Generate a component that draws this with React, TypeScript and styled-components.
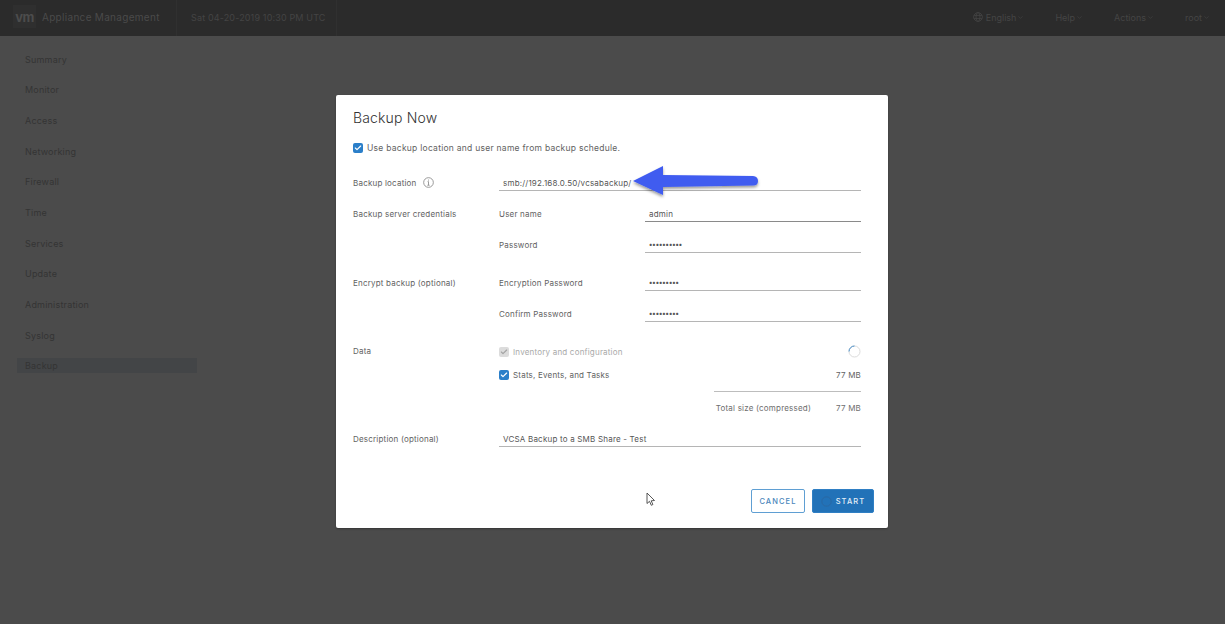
import styled, { createGlobalStyle } from "styled-components";
import { ChevronDown, Check } from "lucide-react";

const GlobalStyle = createGlobalStyle`
  html, body {
    margin: 0;
    height: 100%;
    overflow: hidden;
    background: #4b4b4b;
    font-family: "Inter", "Open Sans", sans-serif;
  }
  * { box-sizing: border-box; }
`;

const Page = styled.div`
  width: 1225px;
  height: 624px;
  display: flex;
  flex-direction: column;
  position: relative;
  overflow: hidden;
`;

const Header = styled.header`
  height: 36px;
  background: #2b2b2b;
  display: flex;
  align-items: center;
  padding-left: 13px;
  color: #4a4a4a;
`;

const Logo = styled.div`
  width: 23px;
  height: 23px;
  margin-top: -3px;
  background: #2f2f2f;
  display: flex;
  align-items: center;
  justify-content: center;
  font-size: 13px;
  font-weight: 700;
  letter-spacing: -0.5px;
  color: #4c4c4c;
`;

const AppTitle = styled.div`
  margin-left: 6px;
  padding-bottom: 2px;
  width: 134px;
  font-size: 10px;
  letter-spacing: 0.3px;
  white-space: nowrap;
`;

const DateCell = styled.div`
  height: 36px;
  width: 161px;
  border-left: 1px solid #303030;
  border-right: 1px solid #303030;
  display: flex;
  align-items: center;
  padding: 0 0 2px 14px;
  font-size: 9px;
  letter-spacing: 0.15px;
  color: #444;
  white-space: nowrap;
`;

const HeaderRight = styled.div`
  margin-left: auto;
  display: flex;
  align-items: center;
  padding: 0 15px 2px 0;
`;

const HeaderMenu = styled.div<{ $gap: number }>`
  display: flex;
  align-items: center;
  margin-left: ${(p) => p.$gap}px;
  font-size: 9px;
  color: #454545;
  white-space: nowrap;

  svg.chev {
    margin-left: 1px;
  }
`;

const Body = styled.div`
  flex: 1;
  display: flex;
`;

const Sidebar = styled.nav`
  width: 197px;
  padding: 15.5px 0 0 17px;
  display: flex;
  flex-direction: column;
  gap: 15.7px;
`;

const NavItem = styled.div<{ $active?: boolean }>`
  height: 15px;
  line-height: 15px;
  padding-left: 8px;
  font-size: 9px;
  letter-spacing: 0.2px;
  color: #343434;
  background: ${(p) => (p.$active ? "#434547" : "transparent")};
`;

const Overlay = styled.div`
  position: absolute;
  inset: 0;
  padding: 95px 337px 96px 336px;
`;

const Modal = styled.div`
  height: 433px;
  background: #fff;
  border-radius: 2px;
  box-shadow: 0 1px 2px rgba(0, 0, 0, 0.3);
  padding: 13px 27px 0 17px;
  display: flex;
  flex-direction: column;
  position: relative;
  color: #626262;
  font-size: 8px;
  letter-spacing: 0.2px;
`;

const Title = styled.h3`
  margin: 0;
  height: 20px;
  line-height: 20px;
  font-size: 14px;
  font-weight: 300;
  letter-spacing: 0.15px;
  color: #333;
`;

const CheckLine = styled.label<{ $muted?: boolean }>`
  display: flex;
  align-items: center;
  gap: 4px;
  height: 15px;
  color: ${(p) => (p.$muted ? "#a9a9a9" : "#626262")};
`;

const ScheduleCheck = styled(CheckLine)`
  margin-top: 12px;
  font-size: 8.5px;
  letter-spacing: 0.26px;
`;

const Box = styled.span<{ $muted?: boolean }>`
  width: 10px;
  height: 10px;
  border-radius: 2px;
  display: flex;
  align-items: center;
  justify-content: center;
  color: ${(p) => (p.$muted ? "#a4a4a4" : "#fff")};
  background: ${(p) => (p.$muted ? "#dcdcdc" : "#2b7fc9")};
`;

const Row = styled.div<{ $top: number }>`
  display: grid;
  grid-template-columns: 146px 146px 1fr;
  align-items: center;
  height: 15px;
  margin-top: ${(p) => p.$top}px;
`;

const SectionLabel = styled.div`
  display: flex;
  align-items: center;
  gap: 6px;
  padding-bottom: 2px;
  white-space: nowrap;
`;

const SubLabel = styled.div`
  grid-column: 2;
  padding-bottom: 2px;
  white-space: nowrap;
`;

const Field = styled.div<{ $wide?: boolean; $strong?: boolean; $dots?: boolean }>`
  grid-column: ${(p) => (p.$wide ? "2 / 4" : "3")};
  height: 15px;
  line-height: 14px;
  padding-left: 4px;
  border-bottom: 1px solid ${(p) => (p.$strong ? "#8a8a8a" : "#b5b5b5")};
  color: #555;
  white-space: nowrap;
  letter-spacing: ${(p) => (p.$dots ? "0" : "0.2px")};
  font-size: ${(p) => (p.$dots ? "7px" : "8px")};
  font-weight: ${(p) => (p.$dots ? 700 : 400)};
`;

const SizeCell = styled.div`
  white-space: nowrap;
`;

const WideCell = styled.div`
  grid-column: 2 / 4;
  display: flex;
  align-items: center;
  justify-content: space-between;
`;

const Divider = styled.div`
  height: 1px;
  width: 147px;
  margin: 9px 0 0 auto;
  background: #bdbdbd;
`;

const TotalRow = styled.div`
  display: flex;
  justify-content: flex-end;
  align-items: center;
  height: 15px;
  margin-top: 9px;
  padding-bottom: 2px;
  color: #6e6e6e;
`;

const TotalSize = styled.span`
  width: 50px;
  text-align: right;
`;

const Footer = styled.div`
  display: flex;
  justify-content: flex-end;
  align-items: center;
  gap: 7px;
  margin-top: 42px;
  margin-right: -13px;
`;

const Button = styled.button<{ $primary?: boolean }>`
  height: 24px;
  border-radius: 2px;
  border: 1px solid ${(p) => (p.$primary ? "#2f7fc4" : "#5f9fd3")};
  background: ${(p) => (p.$primary ? "#2272b8" : "#fff")};
  color: ${(p) => (p.$primary ? "#e4eef7" : "#4a86bb")};
  font-family: inherit;
  font-size: 7.5px;
  font-weight: 500;
  letter-spacing: 1.1px;
  padding: 0;
  display: flex;
  align-items: center;
  justify-content: center;
  gap: 4px;
`;

const CancelButton = styled(Button)`
  width: 54px;
`;

const StartButton = styled(Button)`
  width: 62px;
`;

const ArrowSvg = styled.svg`
  position: absolute;
  left: 290px;
  top: 66px;
`;

const CursorSvg = styled.svg`
  position: absolute;
  left: 310px;
  top: 397px;
`;

const SpinnerSvg = styled.svg`
  display: block;
`;

const navItems = [
  "Summary",
  "Monitor",
  "Access",
  "Networking",
  "Firewall",
  "Time",
  "Services",
  "Update",
  "Administration",
  "Syslog",
  "Backup",
];

function Chevron() {
  return <ChevronDown className="chev" size={7} strokeWidth={2} />;
}

function Globe() {
  return (
    <svg width="10" height="10" viewBox="0 0 10 10" fill="none" stroke="#454545" strokeWidth="0.8" style={{ marginRight: 3 }}>
      <circle cx="5" cy="5" r="4.4" />
      <ellipse cx="5" cy="5" rx="2" ry="4.4" />
      <path d="M1 3.4h8M1 6.6h8" />
    </svg>
  );
}

function InfoIcon() {
  return (
    <svg width="11" height="11" viewBox="0 0 10 10" fill="none" stroke="#8c8c8c" strokeWidth="0.8">
      <circle cx="5" cy="5" r="4.4" />
      <path d="M5 4.2v3.2M4 7.5h2M4.2 4.2H5" />
      <circle cx="5" cy="2.7" r="0.5" fill="#8c8c8c" stroke="none" />
    </svg>
  );
}

export default function App() {
  return (
    <Page>
      <GlobalStyle />
      <Header>
        <Logo>vm</Logo>
        <AppTitle>Appliance Management</AppTitle>
        <DateCell>Sat 04-20-2019 10:30 PM UTC</DateCell>
        <HeaderRight>
          <HeaderMenu $gap={0}>
            <Globe />
            English
            <Chevron />
          </HeaderMenu>
          <HeaderMenu $gap={31}>
            Help
            <Chevron />
          </HeaderMenu>
          <HeaderMenu $gap={31}>
            Actions
            <Chevron />
          </HeaderMenu>
          <HeaderMenu $gap={31}>
            root
            <Chevron />
          </HeaderMenu>
        </HeaderRight>
      </Header>
      <Body>
        <Sidebar>
          {navItems.map((item) => (
            <NavItem key={item} $active={item === "Backup"}>
              {item}
            </NavItem>
          ))}
        </Sidebar>
      </Body>
      <Overlay>
        <Modal>
          <Title>Backup Now</Title>
          <ScheduleCheck>
            <Box>
              <Check size={8} strokeWidth={3.5} />
            </Box>
            Use backup location and user name from backup schedule.
          </ScheduleCheck>
          <Row $top={21}>
            <SectionLabel>
              Backup location
              <InfoIcon />
            </SectionLabel>
            <Field $wide>smb://192.168.0.50/vcsabackup/</Field>
          </Row>
          <Row $top={16}>
            <SectionLabel>Backup server credentials</SectionLabel>
            <SubLabel>User name</SubLabel>
            <Field $strong>admin</Field>
          </Row>
          <Row $top={16}>
            <SubLabel>Password</SubLabel>
            <Field $dots>••••••••••</Field>
          </Row>
          <Row $top={23}>
            <SectionLabel>Encrypt backup (optional)</SectionLabel>
            <SubLabel>Encryption Password</SubLabel>
            <Field $dots>•••••••••</Field>
          </Row>
          <Row $top={16}>
            <SubLabel>Confirm Password</SubLabel>
            <Field $dots>•••••••••</Field>
          </Row>
          <Row $top={22}>
            <SectionLabel>Data</SectionLabel>
            <WideCell>
              <CheckLine $muted>
                <Box $muted>
                  <Check size={8} strokeWidth={3.5} />
                </Box>
                Inventory and configuration
              </CheckLine>
              <SpinnerSvg width="13" height="13" viewBox="0 0 13 13" fill="none" strokeWidth="1">
                <circle cx="6.5" cy="6.5" r="5.5" stroke="#dcdcdc" />
                <path d="M1 6.5A5.5 5.5 0 0 1 6.5 1" stroke="#4a8fc9" />
              </SpinnerSvg>
            </WideCell>
          </Row>
          <Row $top={8}>
            <WideCell>
              <CheckLine>
                <Box>
                  <Check size={8} strokeWidth={3.5} />
                </Box>
                Stats, Events, and Tasks
              </CheckLine>
              <SizeCell>77 MB</SizeCell>
            </WideCell>
          </Row>
          <Divider />
          <TotalRow>
            Total size (compressed)
            <TotalSize>77 MB</TotalSize>
          </TotalRow>
          <Row $top={16}>
            <SectionLabel>Description (optional)</SectionLabel>
            <Field $wide>VCSA Backup to a SMB Share - Test</Field>
          </Row>
          <Footer>
            <CancelButton>CANCEL</CancelButton>
            <StartButton $primary>
              <SpinnerSvg width="11" height="11" viewBox="0 0 11 11" fill="none" stroke="#2a68a3" strokeWidth="1">
                <circle cx="5.5" cy="5.5" r="4.7" />
              </SpinnerSvg>
              START
            </StartButton>
          </Footer>
          <ArrowSvg width="136" height="40" viewBox="0 0 136 40">
            <defs>
              <filter id="arrowShadow" x="-10%" y="-30%" width="120%" height="170%">
                <feDropShadow dx="0" dy="2" stdDeviation="1.5" floodColor="#000" floodOpacity="0.4" />
              </filter>
            </defs>
            <path
              d="M7 20 L37 5 L37 14 L127 15 Q132 15.500 132 20 Q132 24.500 127 24.500 L37 26 L37 34 Z"
              fill="#3f5bf0"
              filter="url(#arrowShadow)"
            />
          </ArrowSvg>
          <CursorSvg width="10" height="15" viewBox="0 0 10 15">
            <path d="M1 1 V11.500 L3.500 9.300 L5.300 13.300 L6.900 12.500 L5.200 8.800 L8.500 8.500 Z" fill="#fff" stroke="#444" strokeWidth="0.9" />
          </CursorSvg>
        </Modal>
      </Overlay>
    </Page>
  );
}
